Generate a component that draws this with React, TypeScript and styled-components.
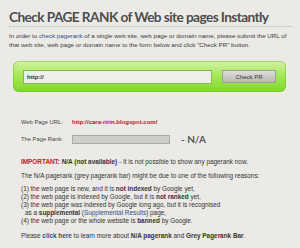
import React from "react";
import styled, { createGlobalStyle } from "styled-components";

const Global = createGlobalStyle`
  html, body { margin: 0; padding: 0; background: #ebeae6; }
  body { font-family: "Liberation Sans", Arial, sans-serif; color: #333; }
`;

const Page = styled.div`
  width: 300px;
  height: 248px;
  overflow: hidden;
  padding: 9px 7px 0 9px;
  box-sizing: border-box;
`;

const Title = styled.h1`
  margin: 0;
  font-family: Lato, "DejaVu Sans", sans-serif;
  font-weight: 700;
  font-size: 13.7px;
  letter-spacing: -0.6px;
  line-height: 16px;
  color: #4d4d4d;
  padding-bottom: 1px;
  border-bottom: 1px dotted #b9b8b4;
  white-space: nowrap;
`;

const Intro = styled.p`
  margin: 4px 0 0 0;
  font-size: 6.2px;
  line-height: 9px;
  color: #3a3a3a;
`;

const Link = styled.span<{ $strong?: boolean }>`
  color: #2c4f8a;
  font-weight: ${(p) => (p.$strong ? 700 : 400)};
`;

const FormPanel = styled.div`
  margin: 12px 7px 0 4px;
  height: 31px;
  border-radius: 6px;
  background: linear-gradient(#d3f3a6 0%, #a6e85a 45%, #7fd82a 100%);
  box-shadow: inset 0 0 0 1px rgba(110, 190, 40, 0.5);
  display: flex;
  align-items: center;
  padding: 0 10px 0 10px;
  gap: 10px;
  box-sizing: border-box;
`;

const UrlInput = styled.div`
  flex: 0 0 189px;
  height: 14px;
  box-sizing: border-box;
  background: #eeeeea;
  border: 1px solid #86b94e;
  font-size: 6px;
  font-weight: 700;
  color: #333;
  display: flex;
  align-items: center;
  padding-left: 3px;
`;

const Button = styled.div`
  width: 54px;
  height: 13px;
  box-sizing: border-box;
  border: 1px solid #9c9c98;
  background: linear-gradient(#e0dfdb, #b9b8b4);
  font-size: 6px;
  color: #333;
  display: flex;
  align-items: center;
  justify-content: center;
`;

const Result = styled.div`
  margin: 27px 0 0 12px;
  display: grid;
  grid-template-columns: 51px auto;
  row-gap: 9px;
  align-items: center;
`;

const Label = styled.span`
  font-size: 5.8px;
  line-height: 7px;
  color: #444;
`;

const UrlValue = styled.span`
  font-size: 6px;
  line-height: 7px;
  font-weight: 700;
  color: #b22222;
`;

const RankRow = styled.div`
  display: flex;
  align-items: center;
  gap: 11px;
`;

const RankBar = styled.div`
  width: 98px;
  height: 9px;
  background: #cfcecb;
  border: 1px solid #a9a8a5;
  box-sizing: border-box;
`;

const NA = styled.span`
  font-family: Lato, "DejaVu Sans", sans-serif;
  font-size: 10px;
  line-height: 9px;
  font-weight: 700;
  color: #555;
`;

const Notes = styled.div`
  margin: 14px 0 0 12px;
  font-size: 6.4px;
  color: #333;
`;

const Para = styled.p<{ $top?: number }>`
  margin: ${(p) => p.$top ?? 0}px 0 0 0;
  line-height: 8px;
`;

const Red = styled.span`
  color: #c0202a;
  font-weight: 700;
`;

const List = styled.div`
  margin-top: 5px;
  line-height: 7.9px;
`;

const Indent = styled.div`
  padding-left: 4px;
`;

export default function App() {
  return (
    <>
      <Global />
      <Page>
        <Title>Check PAGE RANK of Web site pages Instantly</Title>
        <Intro>
          In order to <Link>check pagerank</Link> of a single web site, web page or domain name,
          please submit the URL of that web site, web page or domain name to the form below and
          click "Check PR" button.
        </Intro>
        <FormPanel>
          <UrlInput>http://</UrlInput>
          <Button>Check PR</Button>
        </FormPanel>
        <Result>
          <Label>Web Page URL:</Label>
          <UrlValue>http://cara-ririn.blogspot.com/</UrlValue>
          <Label>The Page Rank:</Label>
          <RankRow>
            <RankBar />
            <NA>- N/A</NA>
          </RankRow>
        </Result>
        <Notes>
          <Para>
            <Red>IMPORTANT:</Red> <b>N/A (not available)</b> - It is not possible to show any
            pagerank now.
          </Para>
          <Para $top={6}>
            The N/A pagerank (grey pagerank bar) might be due to one of the following reasons:
          </Para>
          <List>
            <div>
              (1) the web page is new, and it is <b>not indexed</b> by Google yet,
            </div>
            <div>
              (2) the web page is indexed by Google, but it is <b>not ranked</b> yet,
            </div>
            <div>(3) the web page was indexed by Google long ago, but it is recognised</div>
            <Indent>
              as a <b>supplemental</b> (<Link>Supplemental Results</Link>) page,
            </Indent>
            <div>
              (4) the web page or the whole website is <b>banned</b> by Google.
            </div>
          </List>
          <Para $top={7}>
            Please <Link $strong>click here</Link> to learn more about <b>N/A pagerank</b> and{" "}
            <b>Grey Pagerank Bar</b>.
          </Para>
        </Notes>
      </Page>
    </>
  );
}
